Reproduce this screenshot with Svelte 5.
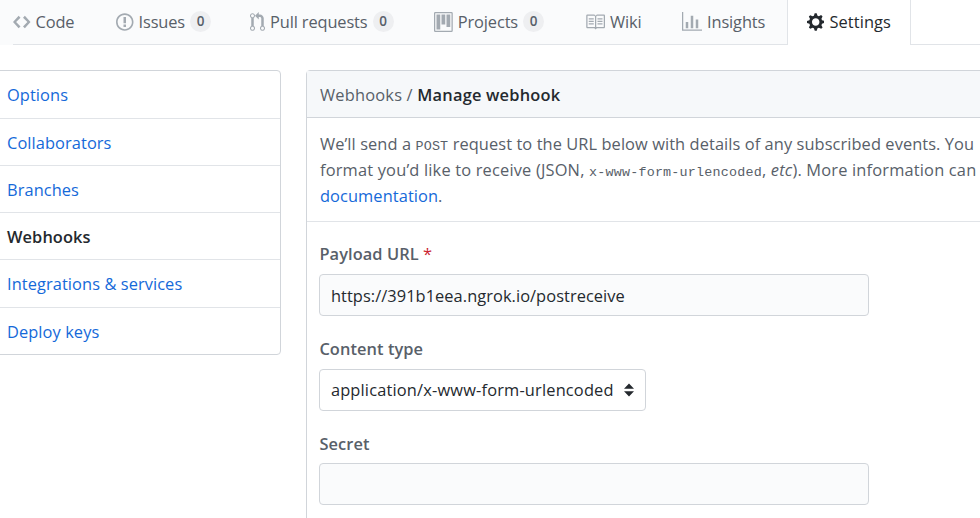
<script>
  // width: tab slot width, icon: icon width
  const tabs = [
    { label: 'Code', width: 103, vb: '0 0 14 16', icon: 17.5, d: 'M9.5 3L8 4.5 11.5 8 8 11.5 9.5 13 14 8 9.5 3zm-5 0L0 8l4.5 5L6 11.5 2.5 8 6 4.5 4.5 3z' },
    { label: 'Issues', width: 134, count: 0, vb: '0 0 14 16', icon: 17.5, d: 'M7 2.3c3.14 0 5.7 2.56 5.7 5.7s-2.56 5.7-5.7 5.7A5.71 5.71 0 0 1 1.3 8c0-3.14 2.56-5.7 5.7-5.7zM7 1C3.14 1 0 4.14 0 8s3.14 7 7 7 7-3.14 7-7-3.14-7-7-7zm1 3H6v5h2V4zm0 6H6v2h2v-2z' },
    { label: 'Pull requests', width: 184, count: 0, vb: '0 0 12 16', icon: 15, d: 'M11 11.28V5c-.03-.78-.34-1.47-.94-2.06C9.46 2.35 8.78 2.03 8 2H7V0L4 3l3 3V4h1c.27.02.48.11.69.31.21.2.3.42.31.69v6.28A1.993 1.993 0 0 0 10 15a1.993 1.993 0 0 0 1-3.72zm-1 2.92c-.66 0-1.2-.55-1.2-1.2 0-.65.55-1.2 1.2-1.2.65 0 1.2.55 1.2 1.2 0 .65-.55 1.2-1.2 1.2zM4 3c0-1.11-.89-2-2-2a1.993 1.993 0 0 0-1 3.72v6.56A1.993 1.993 0 0 0 2 15a1.993 1.993 0 0 0 1-3.72V4.72c.59-.34 1-.98 1-1.72zm-.8 10c0 .66-.55 1.2-1.2 1.2-.65 0-1.2-.55-1.2-1.2 0-.65.55-1.2 1.2-1.2.65 0 1.2.55 1.2 1.2zM2 4.2C1.34 4.2.8 3.65.8 3c0-.65.55-1.2 1.2-1.2.65 0 1.2.55 1.2 1.2 0 .65-.55 1.2-1.2 1.2z' },
    { label: 'Projects', width: 151, count: 0, vb: '0 0 15 16', icon: 18.75, d: 'M10 12h3V2h-3v10zm-4-2h3V2H6v8zm-4 4h3V2H2v12zm-1 1h13V1H1v14zM14 0H1a1 1 0 0 0-1 1v14a1 1 0 0 0 1 1h13a1 1 0 0 0 1-1V1a1 1 0 0 0-1-1z' },
    { label: 'Wiki', width: 97, vb: '0 0 16 16', icon: 20, d: 'M3 5h4v1H3V5zm0 3h4V7H3v1zm0 2h4V9H3v1zm11-5h-4v1h4V5zm0 2h-4v1h4V7zm0 2h-4v1h4V9zm2-6v9c0 .55-.45 1-1 1H9.5l-1 1-1-1H2c-.55 0-1-.45-1-1V3c0-.55.45-1 1-1h5.5l1 1 1-1H15c.55 0 1 .45 1 1zm-8 .5L7.5 3H2v9h6V3.5zm7-.5H9.5l-.5.5V12h6V3z' },
    { label: 'Insights', width: 105, vb: '0 0 16 16', icon: 20, d: 'M16 14v1H0V0h1v14h15zM5 13H3V8h2v5zm4 0H7V3h2v10zm4 0h-2V6h2v7z' },
    { label: 'Settings', width: 124, selected: true, vb: '0 0 14 16', icon: 17.5, d: 'M14 8.77v-1.6l-1.94-.64-.45-1.09.88-1.84-1.13-1.13-1.81.91-1.09-.45-.69-1.92h-1.6l-.63 1.94-1.11.45-1.84-.88-1.13 1.13.91 1.81-.45 1.09L0 7.23v1.59l1.94.64.45 1.09-.88 1.84 1.13 1.13 1.81-.91 1.09.45.69 1.92h1.59l.63-1.94 1.11-.45 1.84.88 1.13-1.13-.92-1.81.47-1.09L14 8.75v.02zM7 11c-1.66 0-3-1.34-3-3s1.34-3 3-3 3 1.34 3 3-1.34 3-3 3z' }
  ];

  const menu = [
    { label: 'Options' },
    { label: 'Collaborators' },
    { label: 'Branches' },
    { label: 'Webhooks', selected: true },
    { label: 'Integrations & services' },
    { label: 'Deploy keys' }
  ];
</script>

<div class="page">
  <nav class="tabs">
    {#each tabs as tab}
      <div class="tab" class:selected={tab.selected} style="width: {tab.width}px">
        <svg viewBox={tab.vb} width={tab.icon} height="20"><path fill-rule="evenodd" d={tab.d} /></svg>
        <span>{tab.label}</span>
        {#if tab.count !== undefined}<span class="counter">{tab.count}</span>{/if}
      </div>
    {/each}
    <div class="tabs-rest"></div>
  </nav>

  <div class="content">
    <aside class="menu">
      {#each menu as item}
        <div class="menu-item" class:selected={item.selected}>{item.label}</div>
      {/each}
    </aside>

    <section class="box">
      <header class="box-header">Webhooks / <strong>Manage webhook</strong></header>
      <div class="intro">
        <div>We’ll send a <code>POST</code> request to the URL below with details of any subscribed events. You</div>
        <div class="wide">format you’d like to receive (JSON, <code>x-www-form-urlencoded</code>, <em>etc</em>). More information can</div>
        <div><span class="link">documentation</span>.</div>
      </div>
      <form class="form">
        <div class="label">Payload URL <span class="req">*</span></div>
        <div class="input url">https://391b1eea.ngrok.io/postreceive</div>
        <div class="label">Content type</div>
        <div class="select">
          <span>application/x-www-form-urlencoded</span>
          <svg viewBox="0 0 12 16" width="12" height="16"><path d="M6 1.5 11 6.8H1zM6 14.5 1 9.2h10z" /></svg>
        </div>
        <div class="label last">Secret</div>
        <div class="input"></div>
      </form>
    </section>
  </div>
</div>

<style>
  :global(body) {
    margin: 0;
    background: #fff;
  }
  .page {
    width: 980px;
    height: 518px;
    overflow: hidden;
    font-family: "Open Sans", sans-serif;
    font-size: 16.4px;
    letter-spacing: 0.08px;
    color: #24292e;
  }
  .tabs {
    display: flex;
    height: 45px;
    padding-left: 13px;
    background: #fafbfc;
    box-sizing: border-box;
  }
  .tab {
    display: flex;
    flex: none;
    align-items: center;
    gap: 5px;
    box-sizing: border-box;
    padding-bottom: 1px;
    color: #586069;
    letter-spacing: -0.12px;
    border-bottom: 1px solid #e1e4e8;
    white-space: nowrap;
  }
  .tab svg {
    fill: #a3aab1;
  }
  .tab.selected {
    padding: 0 19px 2px;
    background: #fff;
    color: #24292e;
    letter-spacing: 0.1px;
    border: 1px solid #e1e4e8;
    border-width: 0 1px;
  }
  .tab.selected svg {
    fill: #24292e;
  }
  .tabs-rest {
    flex: 1;
    background: #fff;
    border-bottom: 1px solid #e1e4e8;
  }
  .counter {
    min-width: 21px;
    height: 21px;
    box-sizing: border-box;
    border-radius: 11px;
    background: #eeeff1;
    font-size: 13.5px;
    font-weight: 600;
    line-height: 21px;
    text-align: center;
  }
  .content {
    display: flex;
    gap: 25px;
    padding-top: 25px;
    margin-left: -10px;
  }
  .menu {
    flex: none;
    align-self: flex-start;
    width: 291px;
    margin-top: 0.4px;
    box-sizing: border-box;
    border: 1px solid #d1d5da;
    border-radius: 4px;
  }
  .menu-item {
    height: 47.25px;
    box-sizing: border-box;
    padding-left: 16px;
    line-height: 47px;
    color: #1569d9;
    border-bottom: 1px solid #e1e4e8;
  }
  .menu-item:last-child {
    height: 46.8px;
    border-bottom: 0;
  }
  .menu-item.selected {
    font-weight: 600;
    color: #24292e;
  }
  .box {
    flex: none;
    width: 900px;
    border: 1px solid #d1d5da;
    border-radius: 4px;
  }
  .box-header {
    height: 47px;
    box-sizing: border-box;
    padding-left: 13px;
    line-height: 47px;
    letter-spacing: 0.2px;
    background: #f6f8fa;
    border-bottom: 1px solid #d1d5da;
    color: #586069;
  }
  .box-header strong {
    font-weight: 600;
    color: #24292e;
  }
  .intro {
    padding: 13px 13px 12px;
    color: #586069;
    white-space: nowrap;
    border-bottom: 1px solid #e1e4e8;
  }
  .intro div {
    height: 26px;
    line-height: 26px;
  }
  .intro .wide {
    letter-spacing: 0.18px;
  }
  .intro code {
    font-family: "Liberation Mono", monospace;
    font-size: 13.4px;
    line-height: 1;
    letter-spacing: 0.2px;
    color: #586069;
  }
  .link {
    color: #1569d9;
  }
  .form {
    display: flex;
    flex-direction: column;
    align-items: flex-start;
    padding: 0 0 40px 12.4px;
  }
  .label {
    height: 24px;
    margin-top: 20.6px;
    margin-bottom: 8px;
    font-weight: 600;
    line-height: 24px;
    color: #586069;
  }
  .label:first-child {
    margin-top: 20.2px;
  }
  .label.last {
    margin-top: 21.2px;
    margin-bottom: 7.4px;
  }
  .req {
    font-weight: 400;
    color: #cb2431;
  }
  .input,
  .select {
    display: flex;
    align-items: center;
    box-sizing: border-box;
    height: 42px;
    padding: 0 10.5px;
    border: 1px solid #d1d5da;
    border-radius: 4px;
  }
  .input {
    width: 550px;
    background: #fafbfc;
  }
  .input.url {
    letter-spacing: 0.06px;
  }
  .select {
    gap: 9px;
    background: #fff;
  }
  .select span {
    letter-spacing: 0.17px;
  }
  .select svg {
    fill: #24292e;
  }
</style>
